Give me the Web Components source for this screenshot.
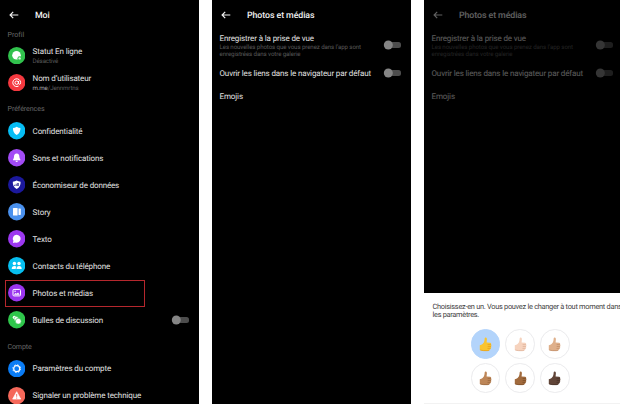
<!DOCTYPE html>
<html lang="fr"><head><meta charset="utf-8"><title>Photos et médias</title>
<style>body{margin:0;background:#fff;font-family:Roboto,"Liberation Sans",sans-serif;overflow:hidden;text-rendering:geometricPrecision}</style></head>
<body><app-board></app-board>
<script>
const define=(name,html,setup)=>customElements.define(name,class extends HTMLElement{
  connectedCallback(){
    if(this.shadowRoot)return;
    this.attachShadow({mode:'open'}).innerHTML=typeof html==='function'?html(this):html;
    if(setup)setup(this);
  }
});

// A single line of text whose tracking is adjusted to span a given width.
define('fit-text','<style>:host{display:block;width:max-content;white-space:nowrap}</style><span><slot></slot></span>',el=>{
  const w=parseFloat(el.getAttribute('w'));
  const n=el.textContent.length;
  const now=el.getBoundingClientRect().width;
  if(w&&n)el.style.letterSpacing=((w-now)/n).toFixed(4)+'px';
});

const glyphs={
  status:['#31c24d','<circle cx="8.5" cy="8.3" r="4.300" fill="#fff"/><circle cx="11.5" cy="11.2" r="2" fill="#31c24d"/><circle cx="11.6" cy="11.4" r="1.2" fill="#dcf7e1"/>'],
  at:['#f4383f','<g fill="none" stroke="#fff" stroke-width="1"><circle cx="8.7" cy="8.7" r="1.7"/><path d="M10.5 7v2.1q0 1.2 1 1.2 1.1 0 1.1-1.8A3.9 3.9 0 1 0 10.6 12.1"/></g>'],
  shield:['#06bdf4','<path d="M8.7 4.8Q10.5 6 12.4 6 12.8 10.7 8.7 13 4.600 10.700 5 6 6.900 6 8.700 4.800Z" fill="#fff"/>'],
  bell:['#a24bf5','<path d="M8.700 4.500C6.700 4.500 6 6 6 7.800 6 9.500 5 10 5 11.200H12.400C12.400 10 11.400 9.500 11.400 7.800 11.400 6 10.700 4.500 8.700 4.500Z" fill="#fff"/><path d="M7.500 11.800h2.400a1.200 1.200 0 0 1-2.400 0" fill="#fff"/>'],
  data:['#1b189c','<path d="M8.700 4.600Q10.500 5.700 12.600 5.700 12.900 10.700 8.700 13.100 4.500 10.700 4.800 5.700 6.900 5.700 8.700 4.600Z" fill="#fff"/><path d="M6.200 10V8.700h1V10M7.700 10V7.800h1V10M9.200 10V6.900h1.600V10Z" fill="#44449d"/>'],
  story:['#4a91ee','<rect x="5" y="4.900" width="4.600" height="7.600" rx=".6" fill="#fff"/><path d="M10.500 5.500h1.700q.6 0 .6.600v5.200q0 .6-.6.600h-1.700z" fill="#fff"/>'],
  text:['#9c38f0','<path d="M8.700 4.700a4 4 0 1 1-1.600 7.700L4.900 13l.5-2.200A4 4 0 0 1 8.700 4.700Z" fill="#fff"/>'],
  people:['#07bff0','<g fill="#fff"><circle cx="6.400" cy="6.500" r="1.750"/><circle cx="11" cy="6.500" r="1.750"/><path d="M3.700 12q0-3 2.700-3 1.500 0 2 .8Q7.700 10.600 7.700 12ZM8.500 12q0-3 2.600-3 2.600 0 2.600 3Z"/></g>'],
  photo:['#9a35ee','<rect x="5" y="5.400" width="7.500" height="6.500" rx="1" fill="none" stroke="#fff" stroke-width="1"/><path d="M5.800 10.800l1.700-1.800 1.300.8 1.200-1.200 1.800 2.200Z" fill="#fff"/><circle cx="7.100" cy="7.300" r=".7" fill="#fff"/>'],
  bubbles:['#2fc64b','<circle cx="6.400" cy="6.500" r="1.700" fill="#fff"/><circle cx="8.300" cy="7.900" r="2.300" fill="#fff" stroke="#2fc64b" stroke-width=".5"/><circle cx="10.300" cy="10.200" r="2.900" fill="#fff" stroke="#2fc64b" stroke-width=".6"/>'],
  gear:['#0a7cf5','<circle cx="8.700" cy="8.700" r="3" fill="none" stroke="#fff" stroke-width="1.200"/><circle cx="8.700" cy="8.700" r="3.900" fill="none" stroke="#fff" stroke-width=".9" stroke-dasharray="1.550 1.513"/>'],
  warn:['#f5685a','<path d="M8.700 4.700l4 7.400H4.700Z" fill="#fff" stroke="#fff" stroke-width=".7" stroke-linejoin="round"/><path d="M8.700 7v2.800M8.700 10.600v1" stroke="#f5685a" stroke-width=".9"/>']
};
define('round-icon',el=>{const [c,p]=glyphs[el.getAttribute('name')];
  return `<style>:host{display:block;width:17.400px;height:17.400px;flex:none}svg{display:block}</style><svg width="17.4" height="17.4" viewBox="0 0 17.4 17.4"><circle cx="8.7" cy="8.7" r="8.7" fill="${c}"/>${p}</svg>`});

define('toggle-switch','<style>:host{display:block;flex:none}svg{display:block}</style><svg width="19" height="10" viewBox="0 0 19 10"><rect x="4" y="2" width="14" height="6" rx="2.500" fill="#4d4d4d"/><circle cx="5.300" cy="5" r="4.500" fill="#858585"/></svg>');

define('title-bar',`<style>:host{display:flex;align-items:center;height:30px;padding-left:8.500px;box-sizing:border-box;color:#f2f2f2;font-size:8.800px;font-weight:500}svg{display:block;margin-right:16.500px}::slotted(*){padding-top:1px}</style>
<svg width="10" height="8" viewBox="0 0 10 8"><path d="M4.200.9L1.100 4l3.100 3.100M1.200 4H9.300" fill="none" stroke="#f2f2f2" stroke-width="1.200"/></svg><slot></slot>`);

define('section-label','<style>:host{display:flex;align-items:center;height:21.500px;padding:4px 0 0 7.500px;box-sizing:border-box;color:#686868;font-size:7.100px}</style><slot></slot>');

define('menu-row',`<style>:host{display:flex;align-items:center;height:27px;padding:0 9px 0 7.600px;box-sizing:border-box;color:#e2e2e2;font-size:8px}
.t{margin-left:7.600px;flex:1;line-height:10px;padding-top:1.500px}::slotted([slot=sub]){font-size:6.200px;line-height:7px;color:#5a5a5a;margin-top:1px}</style>
<slot name="icon"></slot><div class="t"><slot></slot><slot name="sub"></slot></div><slot name="end"></slot>`);

define('option-row',`<style>:host{display:flex;align-items:center;padding:0 8.500px 0 7.500px;box-sizing:border-box;color:#e2e2e2;font-size:8px;line-height:10px}
.t{flex:1;padding-top:2px}::slotted([slot=sub]){font-size:6.200px;line-height:7px;color:#585858}</style><div class="t"><slot></slot><slot name="sub"></slot></div><slot name="end"></slot>`);

define('media-settings',`<style>:host{display:block}.a{height:29px}.b{height:27px}.c{height:20px}</style>
<title-bar><fit-text w="67.500">Photos et médias</fit-text></title-bar>
<option-row class="a"><fit-text w="94.500">Enregistrer à la prise de vue</fit-text><fit-text slot="sub" w="141.500">Les nouvelles photos que vous prenez dans l’app sont</fit-text><fit-text slot="sub" w="81">enregistrées dans votre galerie</fit-text><toggle-switch slot="end"></toggle-switch></option-row>
<option-row class="b"><fit-text w="151.500">Ouvrir les liens dans le navigateur par défaut</fit-text><toggle-switch slot="end"></toggle-switch></option-row>
<option-row class="c"><fit-text w="23.500">Emojis</fit-text></option-row>`);

define('thumb-choice',el=>{const c=el.getAttribute('tone'),d=el.getAttribute('shade');
return `<style>:host{display:flex;align-items:center;justify-content:center;width:29.500px;height:29.500px;box-sizing:border-box;border:1px solid #ebebed;border-radius:50%}:host([selected]){background:#b3d4fb;border-color:#b3d4fb}svg{display:block}</style>
<svg width="13" height="15" viewBox="0 0 13 15"><path d="M.8 8.300Q2.400 8 3.600 7 5.400 5.300 5.500 3.200L5.700 1.300Q6 .4 6.900.6 7.900.9 7.900 2.300L7.600 5.600 11.200 5.700Q12.500 5.900 12.100 7.300 12.900 8.200 12.100 9.200 12.700 10.300 11.800 11.100 12 12.400 10.800 12.700 10.300 14 8.300 14L4.800 13.900Q2.600 13.900.8 12.900Z" fill="${c}"/><path d="M8.600 7.600h3.300M8.700 9.500h3.200M8.500 11.400h3M1.200 13Q4 13.900 8.300 13.700L10.300 13.200" fill="none" stroke="${d}" stroke-width=".6"/></svg>`});

define('emoji-sheet',`<style>:host{display:block;height:111px;background:#fff;box-sizing:border-box;padding:10px 0 0 8.500px;color:#424242;font-size:7.400px;line-height:8.200px}
.grid{display:grid;grid-template-columns:repeat(3,29.500px);gap:4.500px 5.200px;margin:10px 0 0 38.300px}hr{border:0;border-top:1px solid #f2f2f2;margin:10.300px 0 0 -8.500px}</style>
<fit-text w="189">Choisissez-en un. Vous pouvez le changer à tout moment dans</fit-text><fit-text w="46.500">les paramètres.</fit-text>
<div class="grid"><thumb-choice selected tone="#f9c42f" shade="#df9419"></thumb-choice><thumb-choice tone="#f6d3be" shade="#d9aa91"></thumb-choice><thumb-choice tone="#dfb08b" shade="#b98460"></thumb-choice><thumb-choice tone="#bd8658" shade="#8e5f38"></thumb-choice><thumb-choice tone="#a16a3d" shade="#704521"></thumb-choice><thumb-choice tone="#614538" shade="#3e2b24"></thumb-choice></div><hr>`);

const row=(icon,label,w,extra='')=>`<menu-row><round-icon slot="icon" name="${icon}"></round-icon><fit-text w="${w}">${label}</fit-text>${extra}</menu-row>`;
const marked=row('photo','Photos et médias',60.5).replace('<menu-row>','<menu-row class="marked">');
define('profile-menu',`<style>:host{display:block}.first{height:12px;padding-top:0;margin-top:-2px;margin-bottom:2px}.marked{border:1px solid #b5272d;margin-left:5px;width:140px;padding-left:1.600px}</style>
<title-bar><fit-text w="14.500">Moi</fit-text></title-bar>
<section-label class="first"><fit-text w="16.500">Profil</fit-text></section-label>
${row('status','Statut En ligne',49.5,'<fit-text slot="sub" w="25.500">Désactivé</fit-text>')}
${row('at','Nom d’utilisateur',58.5,'<fit-text slot="sub" w="46"><span style="color:#aaa">m.me</span>/Jennmrtns</fit-text>')}
<section-label><fit-text w="37">Préférences</fit-text></section-label>
${row('shield','Confidentialité',49.5)}${row('bell','Sons et notifications',70.5)}${row('data','Économiseur de données',86.5)}${row('story','Story',18)}${row('text','Texto',19)}${row('people','Contacts du téléphone',77.5)}
${marked}
${row('bubbles','Bulles de discussion',70.5,'<toggle-switch slot="end"></toggle-switch>')}
<section-label><fit-text w="24">Compte</fit-text></section-label>
${row('gear','Paramètres du compte',78.5)}${row('warn','Signaler un problème technique',108.5)}`);

define('phone-screen','<style>:host{display:flex;flex-direction:column;background:#000;height:404px;overflow:hidden}</style><slot></slot>');
define('app-board',`<style>:host{display:grid;grid-template-columns:198.500px 198.500px 196px;column-gap:13.500px;height:404px;overflow:hidden}.dim{opacity:.4;width:198.500px}emoji-sheet{margin-top:auto}</style>
<phone-screen><profile-menu></profile-menu></phone-screen>
<phone-screen><media-settings></media-settings></phone-screen>
<phone-screen><media-settings class="dim"></media-settings><emoji-sheet></emoji-sheet></phone-screen>`);
</script></body></html>
